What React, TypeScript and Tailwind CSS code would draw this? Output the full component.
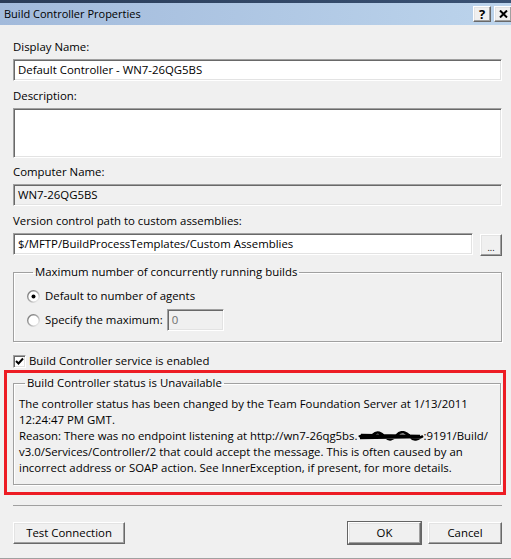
import React from "react";

const sunken =
  "border border-t-[#a0a0a0] border-l-[#a0a0a0] border-r-white border-b-white shadow-[inset_1px_1px_0_#696969,inset_-1px_-1px_0_#e3e3e3]";
const raised =
  "border border-t-white border-l-white border-r-[#696969] border-b-[#696969] shadow-[inset_-1px_-1px_0_#a0a0a0,inset_1px_1px_0_#e3e3e3] bg-[#f0f0f0]";

const Label = ({ children, className = "" }: { children: React.ReactNode; className?: string }) => (
  <div className={"h-[16px] leading-[16px] " + className}>{children}</div>
);

const Radio = ({ checked }: { checked?: boolean }) => (
  <svg width="13" height="13" viewBox="0 0 13 13" className="shrink-0">
    <defs>
      <linearGradient id={checked ? "rg1" : "rg2"} x1="0" y1="0" x2="1" y2="1">
        <stop offset="0" stopColor="#6f6f6f" />
        <stop offset="0.5" stopColor="#a8a8a8" />
        <stop offset="1" stopColor="#ffffff" />
      </linearGradient>
    </defs>
    <circle cx="6.5" cy="6.5" r="5.8" fill="#ffffff" stroke={`url(#${checked ? "rg1" : "rg2"})`} strokeWidth="1.4" />
    {checked && <circle cx="6.5" cy="6.5" r="2" fill="#000" />}
  </svg>
);

const Button = ({ children, className = "" }: { children: React.ReactNode; className?: string }) => (
  <div className={"flex h-[22px] items-center justify-center " + raised + " " + className}>{children}</div>
);

export default function App() {
  return (
    <div className="flex h-[559px] w-[511px] flex-col overflow-hidden border-b border-[#a0a0a0] bg-[#f0f0f0] font-['Open_Sans','Noto_Sans',sans-serif] text-[11.4px] text-black">
      <div className="h-[3px] bg-linear-to-r from-[#2a3c58] to-[#3a5274]" />
      <div className="flex h-[22px] items-center justify-between bg-linear-to-r from-[#a2badb] to-[#bcd4ec] pl-[4px] text-[11px]">
        <span>Build Controller Properties</span>
        <div className="-mr-[1px] flex gap-[3px]">
          <div className={"flex h-[16px] w-[18px] items-center justify-center text-[13px] font-bold leading-none " + raised}>?</div>
          <div className={"flex h-[16px] w-[18px] items-center justify-center " + raised}>
            <svg width="9" height="8" viewBox="0 0 9 8">
              <path d="M1 0.5 L8 7.5 M8 0.5 L1 7.5" stroke="#000" strokeWidth="2" />
            </svg>
          </div>
        </div>
      </div>

      <div className="flex flex-col pl-[13px] pr-[9px]">
        <Label className="mt-[14px]">Display Name:</Label>
        <div className={"mt-[4px] flex h-[22px] items-center bg-white pl-[4px] " + sunken}>
          Default Controller - WN7-26QG5BS
        </div>

        <Label className="mt-[7px]">Description:</Label>
        <div className={"mt-[4px] h-[50px] bg-white " + sunken} />

        <Label className="mt-[6px]">Computer Name:</Label>
        <div className={"mt-[4px] flex h-[22px] items-center bg-[#f0f0f0] pl-[4px] " + sunken}>WN7-26QG5BS</div>

        <Label className="mt-[7px]">Version control path to custom assemblies:</Label>
        <div className="mt-[4px] flex items-start gap-[7px]">
          <div className={"flex h-[22px] flex-1 items-center bg-white pl-[4px] " + sunken}>
            $/MFTP/BuildProcessTemplates/Custom Assemblies
          </div>
          <Button className="mt-[1px] w-[22px] items-end pb-[3px] text-[9px] leading-none">...</Button>
        </div>

        <fieldset className="mt-[8px] border border-[#a0a0a0] pb-[10px] pl-[13px] shadow-[inset_1px_1px_0_#fff,1px_1px_0_#fff]">
          <legend className="ml-[6px] h-[16px] px-[2px] leading-[16px]">Maximum number of concurrently running builds</legend>
          <div className="mt-[8px] flex h-[16px] items-center gap-[5px]">
            <Radio checked />
            <span>Default to number of agents</span>
          </div>
          <div className="mt-[5px] flex h-[22px] items-center">
            <Radio />
            <span className="ml-[5px]">Specify the maximum:</span>
            <div className={"ml-[4px] flex h-[22px] w-[57px] items-center bg-[#f0f0f0] pl-[4px] text-[#6d6d6d] " + sunken}>0</div>
          </div>
        </fieldset>

        <div className="mt-[11px] flex h-[16px] items-center gap-[3px]">
          <div className={"flex h-[13px] w-[13px] items-center justify-center bg-white " + sunken}>
            <svg width="9" height="9" viewBox="0 0 9 9">
              <path d="M1 4 L3.5 6.5 L8 1.5" stroke="#000" strokeWidth="2" fill="none" />
            </svg>
          </div>
          <span>Build Controller service is enabled</span>
        </div>

        <div className="-ml-[9px] -mr-[4px] mt-[1px] border-[3px] border-[#ed1c24] pb-[7px] pl-[6px] pr-[2px] pt-[2px]">
          <fieldset className="border border-[#a0a0a0] pb-[8px] pl-[5px] shadow-[inset_1px_1px_0_#fff,1px_1px_0_#fff]">
            <legend className="ml-[6px] h-[16px] px-[2px] leading-[16px]">Build Controller status is Unavailable</legend>
            <div className="mt-[5px] whitespace-nowrap leading-[16px]">
              <div>The controller status has been changed by the Team Foundation Server at 1/13/2011</div>
              <div>12:24:47 PM GMT.</div>
              <div className="flex items-center">
                <span>Reason: There was no endpoint listening at http://wn7-26qg5bs.</span>
                <svg width="66" height="10" viewBox="0 0 68 10" className="shrink-0">
                  <path
                    d="M1 6 C6 1, 10 9, 15 4 S24 2, 28 6 S36 9, 40 4 S50 1, 54 6 S62 8, 67 5 M3 4 L64 5 M2 7 L66 6"
                    stroke="#000"
                    strokeWidth="2.6"
                    fill="none"
                  />
                </svg>
                <span>:9191/Build/</span>
              </div>
              <div>v3.0/Services/Controller/2 that could accept the message. This is often caused by an</div>
              <div>incorrect address or SOAP action. See InnerException, if present, for more details.</div>
            </div>
          </fieldset>
        </div>

        <div className="mt-[10px] h-px bg-[#a0a0a0]" />

        <div className="mt-[15px] flex items-center">
          <Button className="w-[112px]">Test Connection</Button>
          <div className="flex-1" />
          <div className="border border-[#646464]">
            <Button className="h-[20px] w-[73px]">OK</Button>
          </div>
          <Button className="ml-[6px] w-[74px]">Cancel</Button>
        </div>
      </div>
    </div>
  );
}
